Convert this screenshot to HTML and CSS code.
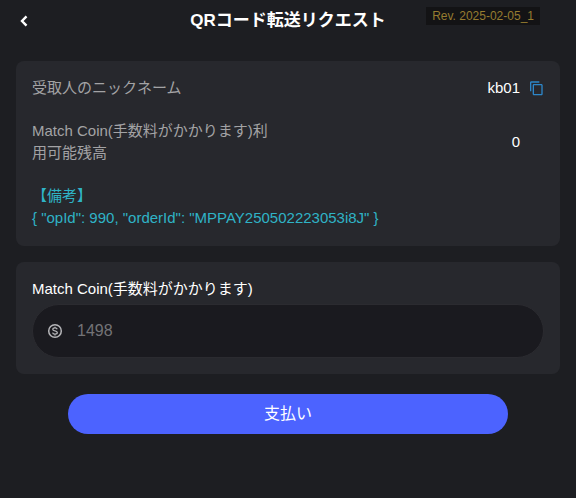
FILE: index.html
```html
<!DOCTYPE html>
<html lang="ja">
<head>
<meta charset="utf-8">
<meta name="viewport" content="width=device-width, initial-scale=1">
<title>QRコード転送リクエスト</title>
<link rel="stylesheet" href="styles.css">
</head>
<body>
<header class="topbar">
  <button class="icon-button back" type="button" aria-label="戻る">
    <svg width="16" height="16" viewBox="0 0 16 16" fill="none" stroke="currentColor" stroke-width="2.400"><path d="M10.500 3.400 6 8l4.500 4.600"/></svg>
  </button>
  <h1 class="title">QRコード転送リクエスト</h1>
  <span class="revision">Rev. 2025-02-05_1</span>
</header>
<main class="content">
  <section class="card details">
    <div class="row">
      <span class="row-label">受取人のニックネーム</span>
      <span class="row-value">kb01</span>
      <button class="icon-button copy" type="button" aria-label="コピー">
        <svg width="16" height="16" viewBox="0 0 24 24" fill="currentColor"><path d="M17 2H5C3.900 2 3 2.900 3 4v13h2V4h12V2zm3 4H9c-1.100 0-2 .9-2 2v13c0 1.100.9 2 2 2h11c1.100 0 2-.9 2-2V8c0-1.100-.9-2-2-2zm0 15H9V8h11v13z"/></svg>
      </button>
    </div>
    <div class="row">
      <span class="row-label">Match Coin(手数料がかかります)利用可能残高</span>
      <span class="row-value">0</span>
      <span class="icon-space"></span>
    </div>
    <div class="remark">
      <div>【備考】</div>
      <div>{ "opId": 990, "orderId": "MPPAY250502223053i8J" }</div>
    </div>
  </section>
  <form class="payment">
    <div class="card amount">
      <label for="amount">Match Coin(手数料がかかります)</label>
      <div class="field">
        <svg class="coin" width="16" height="16" viewBox="0 0 16 16" fill="none" stroke="currentColor"><circle cx="8" cy="8" r="6.300" stroke-width="1.500"/><path stroke-width="1.300" d="M10.200 6.200C9.900 5.300 9.100 4.900 8 4.900c-1.300 0-2.200.6-2.200 1.500C5.800 8.500 10.300 7.300 10.300 9.600c0 1-.9 1.600-2.300 1.600-1.300 0-2.200-.6-2.400-1.600M8 3.700v1.200M8 11.200v1.200"/></svg>
        <input id="amount" type="text" inputmode="numeric" placeholder="1498">
      </div>
    </div>
    <button class="pay" type="button">支払い</button>
  </form>
</main>
</body>
</html>
```
FILE: styles.css
```css
* {
  box-sizing: border-box;
}

body {
  margin: 0;
  min-height: 100vh;
  background: #1d1e22;
  color: #fff;
  font-family: "Liberation Sans", "Noto Sans CJK JP", sans-serif;
  font-size: 15px;
  line-height: 22px;
}

button,
input {
  font: inherit;
  color: inherit;
}

.icon-button {
  display: flex;
  padding: 0;
  border: 0;
  background: none;
}

.topbar {
  position: relative;
  display: grid;
  grid-template-columns: 16px 1fr 16px;
  align-items: center;
  height: 41px;
  padding: 0 16px;
}

.title {
  margin: 0;
  font-size: 17px;
  font-weight: 700;
  text-align: center;
}

.revision {
  position: absolute;
  top: 7px;
  right: 36px;
  padding: 0 6px;
  background: #131315;
  color: #967c30;
  font-size: 12px;
  line-height: 18px;
}

.content {
  padding: 20px 16px;
}

.card {
  padding: 16px;
  border-radius: 8px;
  background: #27282d;
}

.details {
  display: grid;
  gap: 21px;
  padding-bottom: 17px;
}

.row {
  display: flex;
  align-items: center;
  gap: 8px;
}

.row-label {
  max-width: 48%;
  color: #a3a3a5;
}

.row-value {
  margin-left: auto;
}

.icon-space {
  width: 16px;
}

.copy {
  color: #2d86c8;
}

.remark {
  color: #2fb3c6;
}

.payment {
  margin-top: 16px;
}

.amount {
  display: grid;
  gap: 4px;
}

.field {
  display: flex;
  align-items: center;
  gap: 14px;
  height: 54px;
  padding: 0 14px;
  border: 1px solid #2b2b30;
  border-radius: 27px;
  background: #1a1a1f;
}

.coin {
  flex: none;
  color: #b5b5b8;
}

.field input {
  flex: 1;
  min-width: 0;
  padding: 0;
  border: 0;
  outline: 0;
  background: none;
  font-size: 16px;
}

.field input::placeholder {
  color: #737376;
}

.pay {
  display: block;
  width: calc(100% - 104px);
  height: 40px;
  margin: 20px auto 0;
  border: 0;
  border-radius: 20px;
  background: #4c63ff;
  font-size: 16px;
}
```
